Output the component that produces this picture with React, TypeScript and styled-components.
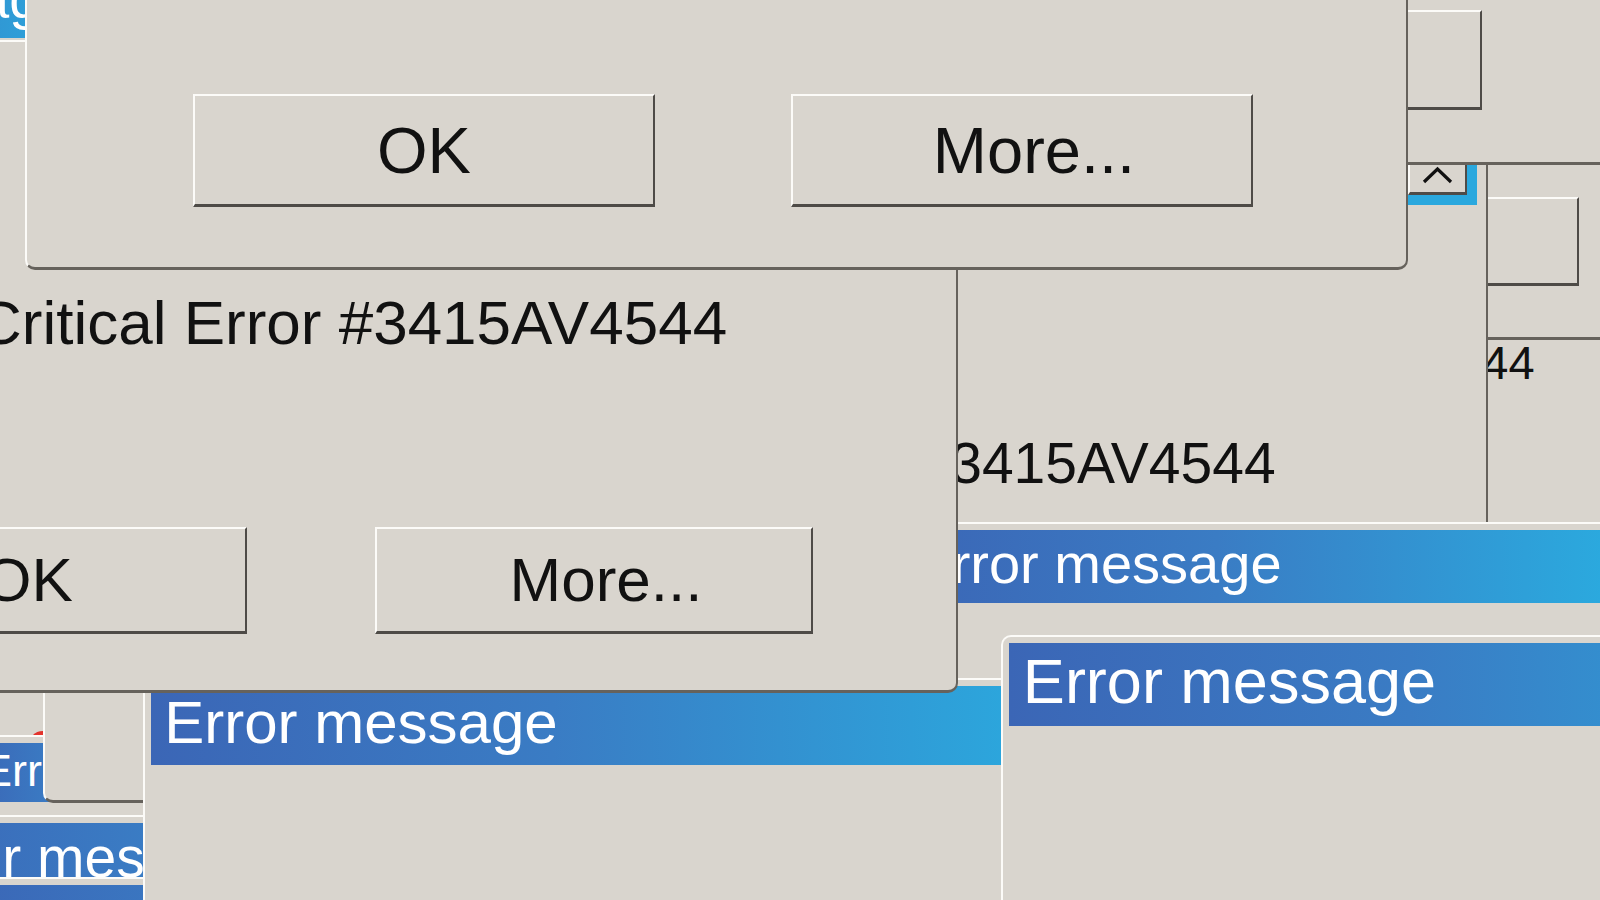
import React from "react";
import styled, { createGlobalStyle, css } from "styled-components";

const FACE = "#d9d5ce";
const LIGHT = "#fcfbf8";
const SHADE = "#66625c";
const DARK = "#4e4b47";
const CYAN = "#2aa8de";

const GlobalStyle = createGlobalStyle`
  html, body {
    margin: 0;
    padding: 0;
    background: ${FACE};
  }
  body {
    font-family: "Liberation Sans", Arial, sans-serif;
  }
`;

const Desktop = styled.main`
  position: relative;
  width: 1600px;
  height: 900px;
  overflow: hidden;
  background: ${FACE};
  font-family: "Liberation Sans", Arial, sans-serif;
`;

type FrameProps = {
  $x: number;
  $y: number;
  $w: number;
  $h: number;
  $z: number;
  $pad?: string;
  $accent?: boolean;
};

/* A dialog window lying somewhere on the desktop */
const Window = styled.section<FrameProps>`
  position: absolute;
  left: ${(p) => p.$x}px;
  top: ${(p) => p.$y}px;
  width: ${(p) => p.$w}px;
  height: ${(p) => p.$h}px;
  z-index: ${(p) => p.$z};
  box-sizing: border-box;
  display: flex;
  flex-direction: column;
  align-items: flex-start;
  padding: ${(p) => p.$pad ?? "6px"};
  background: ${FACE};
  border-style: solid;
  border-width: 2px 2px 3px 2px;
  border-color: ${LIGHT} ${SHADE} ${SHADE} ${LIGHT};
  border-radius: 10px;
  overflow: hidden;
  ${(p) =>
    p.$accent &&
    css`
      border-width: 2px 10px 10px 2px;
      border-color: ${LIGHT} ${CYAN} ${CYAN} ${LIGHT};
      border-radius: 0;
    `}
`;

const TitleBar = styled.header<{ $fs: number }>`
  flex: none;
  align-self: stretch;
  box-sizing: border-box;
  height: ${(p) => Math.round(p.$fs * 1.31)}px;
  padding: ${(p) => p.$fs * 0.11}px 0 0 ${(p) => p.$fs * 0.22}px;
  background: linear-gradient(90deg, #3b66b6 0%, #3a7cc4 45%, #2ba9de 100%);
  color: #ffffff;
  font-size: ${(p) => p.$fs}px;
  line-height: 1;
  white-space: nowrap;
  overflow: hidden;
`;

const Message = styled.p<{ $fs: number; $top: number; $indent: number }>`
  flex: none;
  margin: ${(p) => p.$top}px 0 0 ${(p) => p.$indent}px;
  font-size: ${(p) => p.$fs}px;
  line-height: 1;
  color: #111111;
  white-space: nowrap;
`;

const ButtonRow = styled.div<{ $gap: number; $indent: number; $bottom: number }>`
  display: flex;
  gap: ${(p) => p.$gap}px;
  margin-top: auto;
  padding: 0 0 ${(p) => p.$bottom}px ${(p) => p.$indent}px;
`;

const PushButton = styled.button<{ $w: number; $h: number; $fs?: number; $lead?: number }>`
  flex: none;
  box-sizing: border-box;
  width: ${(p) => p.$w}px;
  height: ${(p) => p.$h}px;
  display: flex;
  align-items: center;
  justify-content: center;
  margin: 0;
  padding: 0 0 0 ${(p) => p.$lead ?? 0}px;
  background: ${FACE};
  border-style: solid;
  border-width: 2px 2px 3px 2px;
  border-color: ${LIGHT} ${DARK} ${DARK} ${LIGHT};
  font-family: inherit;
  font-size: ${(p) => p.$fs ?? 60}px;
  line-height: 1;
  color: #111111;
`;

const CloseDot = styled.span`
  display: block;
  flex: none;
  width: 30px;
  height: 30px;
  border-radius: 50%;
  background: radial-gradient(circle at 40% 35%, #f2433b, #c4120d);
`;

const Chevron = () => (
  <svg width="31" height="18" viewBox="0 0 31 18" aria-hidden="true">
    <polyline
      points="2,16 15.5,3 29,16"
      fill="none"
      stroke="#111"
      strokeWidth="3.2"
      strokeLinejoin="miter"
    />
  </svg>
);

const ERROR_CODE = "Critical Error #3415AV4544";

export default function App() {
  return (
    <>
      <GlobalStyle />
      <Desktop>
        {/* far right, partly hidden report */}
        <Window $x={900} $y={330} $w={800} $h={300} $z={1}>
          <Message $fs={47} $top={1} $indent={58}>
            {ERROR_CODE}
          </Message>
        </Window>

        <Window $x={1300} $y={100} $w={400} $h={240} $z={2} $pad="95px 0 0 98px">
          <PushButton $w={179} $h={89} />
        </Window>

        {/* report behind the middle dialog */}
        <Window $x={300} $y={150} $w={1188} $h={450} $z={3}>
          <Message $fs={57} $top={277} $indent={278}>
            {ERROR_CODE}
          </Message>
        </Window>

        {/* scroll frame with the up arrow */}
        <Window $x={1150} $y={100} $w={327} $h={105} $z={4} $accent $pad="54px 0 0 256px">
          <PushButton $w={59} $h={39}>
            <Chevron />
          </PushButton>
        </Window>

        <Window $x={1300} $y={-100} $w={320} $h={265} $z={5} $pad="108px 0 0 28px">
          <PushButton $w={152} $h={100} />
        </Window>

        <Window $x={894} $y={522} $w={716} $h={300} $z={6}>
          <TitleBar $fs={56}>Error message</TitleBar>
        </Window>

        {/* bottom-left pile */}
        <Window $x={-300} $y={650} $w={370} $h={200} $z={7} $pad="79px 0 0 326px">
          <CloseDot />
        </Window>

        <Window $x={-36} $y={735} $w={200} $h={100} $z={8}>
          <TitleBar $fs={45}>Error message</TitleBar>
        </Window>

        <Window $x={43} $y={600} $w={300} $h={203} $z={9} />

        <Window $x={-126} $y={815} $w={600} $h={200} $z={10}>
          <TitleBar $fs={57}>Error message</TitleBar>
        </Window>

        <Window $x={-50} $y={877} $w={600} $h={100} $z={11}>
          <TitleBar $fs={55} />
        </Window>

        <Window $x={143} $y={678} $w={907} $h={300} $z={12}>
          <TitleBar $fs={60}>Error message</TitleBar>
        </Window>

        {/* top-left corner, tucked under the middle dialog */}
        <Window $x={-316} $y={-43} $w={400} $h={110} $z={13}>
          <TitleBar $fs={56}>Error message</TitleBar>
        </Window>

        <Window $x={1001} $y={635} $w={907} $h={300} $z={14}>
          <TitleBar $fs={63}>Error message</TitleBar>
        </Window>

        {/* middle dialog */}
        <Window $x={-250} $y={40} $w={1208} $h={653} $z={15}>
          <Message $fs={62} $top={244} $indent={219}>
            {ERROR_CODE}
          </Message>
          <ButtonRow $gap={128} $indent={51} $bottom={50}>
            <PushButton $w={438} $h={107} $fs={62}>
              OK
            </PushButton>
            <PushButton $w={438} $h={107} $fs={62} $lead={24}>
              More...
            </PushButton>
          </ButtonRow>
        </Window>

        {/* front dialog */}
        <Window $x={25} $y={-120} $w={1383} $h={390} $z={16}>
          <ButtonRow $gap={136} $indent={160} $bottom={54}>
            <PushButton $w={462} $h={113} $fs={65}>
              OK
            </PushButton>
            <PushButton $w={462} $h={113} $fs={65} $lead={24}>
              More...
            </PushButton>
          </ButtonRow>
        </Window>
      </Desktop>
    </>
  );
}
